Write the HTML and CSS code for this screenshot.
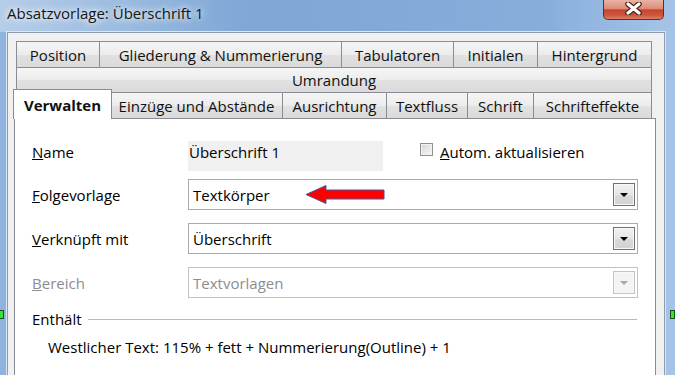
FILE: index.html
```html
<!DOCTYPE html>
<html lang="de">

<head>
  <meta charset="UTF-8" />
  <title>Absatzvorlage: Überschrift 1</title>
  <link rel="stylesheet" href="styles.css">
</head>

<body>
  <div class="titlebar">
    <span class="title">Absatzvorlage: Überschrift 1</span>
    <div class="close">
      <svg width="17" height="13" viewBox="0 0 17 13">
        <path d="M3 2 L14 11 M14 2 L3 11" stroke="#4a1d16" stroke-width="5.5" stroke-linecap="round" />
        <path d="M3 2 L14 11 M14 2 L3 11" stroke="#fff" stroke-width="3.2" stroke-linecap="round" />
      </svg>
    </div>
  </div>

  <div class="dialog">
    <div class="tabrow row1">
      <div class="tab">Position</div>
      <div class="tab">Gliederung &amp; Nummerierung</div>
      <div class="tab">Tabulatoren</div>
      <div class="tab">Initialen</div>
      <div class="tab">Hintergrund</div>
    </div>
    <div class="tabrow row2">
      <div class="tab">Umrandung</div>
    </div>
    <div class="tabrow row3">
      <div class="tab active">Verwalten</div>
      <div class="tab">Einzüge und Abstände</div>
      <div class="tab">Ausrichtung</div>
      <div class="tab">Textfluss</div>
      <div class="tab">Schrift</div>
      <div class="tab">Schrifteffekte</div>
    </div>

    <div class="panel">
      <div class="form">
        <div class="row name">
          <span class="label"><u>N</u>ame</span>
          <span class="field">Überschrift 1</span>
          <span class="check"><span class="box"></span><span><u>A</u>utom. aktualisieren</span></span>
        </div>
        <div class="row">
          <span class="label"><u>F</u>olgevorlage</span>
          <div class="combo">
            <span class="value">Textkörper</span>
            <span class="drop"><span class="tri"></span></span>
            <svg class="arrow" width="82" height="22" viewBox="0 0 82 22">
              <path d="M1 10.5 L21 1.5 L21 6 L79 6 L79 15 L21 15 L21 19.5 Z" fill="#ff0000" stroke="#3d5a9e" stroke-width="1" />
            </svg>
          </div>
        </div>
        <div class="row">
          <span class="label"><u>V</u>erknüpft mit</span>
          <div class="combo">
            <span class="value">Überschrift</span>
            <span class="drop"><span class="tri"></span></span>
          </div>
        </div>
        <div class="row">
          <span class="label disabled"><u>B</u>ereich</span>
          <div class="combo disabled">
            <span class="value">Textvorlagen</span>
            <span class="drop"><span class="tri"></span></span>
          </div>
        </div>
      </div>

      <div class="contains">
        <span>Enthält</span>
        <span class="line"></span>
      </div>
      <div class="summary">Westlicher Text: 115% + fett + Nummerierung(Outline) + 1</div>
    </div>
  </div>

  <span class="handle left"></span>
  <span class="handle right"></span>
</body>

</html>
```

FILE: styles.css
```css
* {
  box-sizing: border-box;
}

body {
  margin: 0;
  width: 675px;
  height: 375px;
  overflow: hidden;
  position: relative;
  font-family: "Open Sans", "Noto Sans", sans-serif;
  font-size: 15px;
  line-height: 20px;
  color: #000;
  background: linear-gradient(to right, #8fb3dd, #7ea7d6 40%, #86aedb 80%, #a6c4e7);
}

.titlebar {
  height: 32px;
  display: flex;
  align-items: flex-start;
  background: linear-gradient(to right, rgba(255, 255, 255, 0.35), rgba(255, 255, 255, 0) 35%);
}

.title {
  padding: 3px 0 0 7px;
  color: #151515;
  text-shadow: 0 0 6px #fff, 0 0 10px rgba(255, 255, 255, 0.8);
}

.close {
  margin-left: auto;
  margin-right: 11px;
  width: 61px;
  height: 20px;
  border: 1px solid #6b2a1e;
  border-top: none;
  border-radius: 0 0 5px 5px;
  background: linear-gradient(#eab3a5, #dc8c78 45%, #c8452c 52%, #cc563d 80%, #dc8068);
  display: flex;
  align-items: center;
  justify-content: center;
  padding-bottom: 2px;
}

.dialog {
  margin-left: 7px;
  width: 658px;
  height: 343px;
  overflow: hidden;
  background: #f0f0f0;
  border: 1px solid #8d9cad;
  border-bottom: none;
  box-shadow: 0 0 0 1px #dbe7f4;
  padding: 8px 8px 0 6px;
}

.tabrow {
  display: grid;
  height: 26px;
  margin: 0 4px 0 2px;
}

.row1 {
  grid-template-columns: 84px 242px 112px 84px 114px;
}

.row2 {
  height: 25px;
  grid-template-columns: 1fr;
}

.row3 {
  grid-template-columns: 95px 172px 104px 81px 66px 118px;
}

.tab {
  border: 1px solid #898c95;
  border-bottom: none;
  background: linear-gradient(#f5f5f5, #ececec 50%, #e1e1e1 51%, #dadada);
  display: flex;
  align-items: center;
  justify-content: center;
  white-space: nowrap;
  color: #111;
}

.tab + .tab {
  margin-left: -1px;
}

.tab.active {
  background: #fff;
  font-weight: bold;
  margin: -3px -1px -1px -3px;
  position: relative;
  z-index: 2;
}

.panel {
  width: 642px;
  height: 257px;
  border: 1px solid #898c95;
  border-bottom: none;
  background: #fff;
  padding: 22px 17px 0 17px;
}

.form {
  display: flex;
  flex-direction: column;
  gap: 13px;
}

.row {
  display: flex;
  align-items: center;
  height: 31px;
}

.row.name {
  height: 30px;
  margin-bottom: -5px;
  align-items: flex-start;
}

.label {
  width: 156px;
  flex-shrink: 0;
}

.row.name .label {
  margin-top: 1px;
}

.disabled {
  color: #8d8d8d;
}

.field {
  width: 195px;
  height: 30px;
  background: #f0f0f0;
  padding: 1px 0 0 1px;
}

.check {
  margin-left: 37px;
  margin-top: 1px;
  display: flex;
  align-items: center;
  gap: 7px;
}

.box {
  width: 13px;
  height: 13px;
  margin-bottom: 5px;
  border: 1px solid #8e8f8f;
  background: linear-gradient(135deg, #d6d6d6, #f8f8f8);
  box-shadow: inset 0 0 0 1px #f2f2f2;
}

.combo {
  flex: 1;
  height: 31px;
  border: 1px solid #a9abb0;
  background: #fff;
  display: flex;
  align-items: center;
  padding: 0 2px 0 4px;
  position: relative;
}

.combo .value {
  flex: 1;
}

.drop {
  width: 22px;
  height: 23px;
  border: 1px solid #707070;
  background: linear-gradient(#f2f2f2, #e6e6e6 50%, #dadada 51%, #d2d2d2);
  box-shadow: inset 0 0 0 1px #f8f8f8;
  display: flex;
  align-items: center;
  justify-content: center;
}

.tri {
  width: 0;
  height: 0;
  border-left: 4px solid transparent;
  border-right: 4px solid transparent;
  border-top: 4px solid #000;
}

.combo.disabled {
  border-color: #c3c3c3;
}

.combo.disabled .drop {
  border-color: #c4c4c4;
  background: #f4f4f4;
}

.combo.disabled .tri {
  border-top-color: #a8a8a8;
}

.arrow {
  position: absolute;
  left: 116px;
  top: 4px;
}

.contains {
  display: flex;
  align-items: center;
  gap: 6px;
  margin-top: 11px;
}

.line {
  flex: 1;
  margin-right: 1px;
  border-top: 1px solid #b9b9b9;
}

.summary {
  margin-top: 8px;
  padding-left: 16px;
}

.handle {
  position: absolute;
  top: 310px;
  width: 5px;
  height: 9px;
  background: #2ee82e;
  border: 1px solid #1a4d1a;
}

.handle.left {
  left: -1px;
}

.handle.right {
  right: 0;
}
```
